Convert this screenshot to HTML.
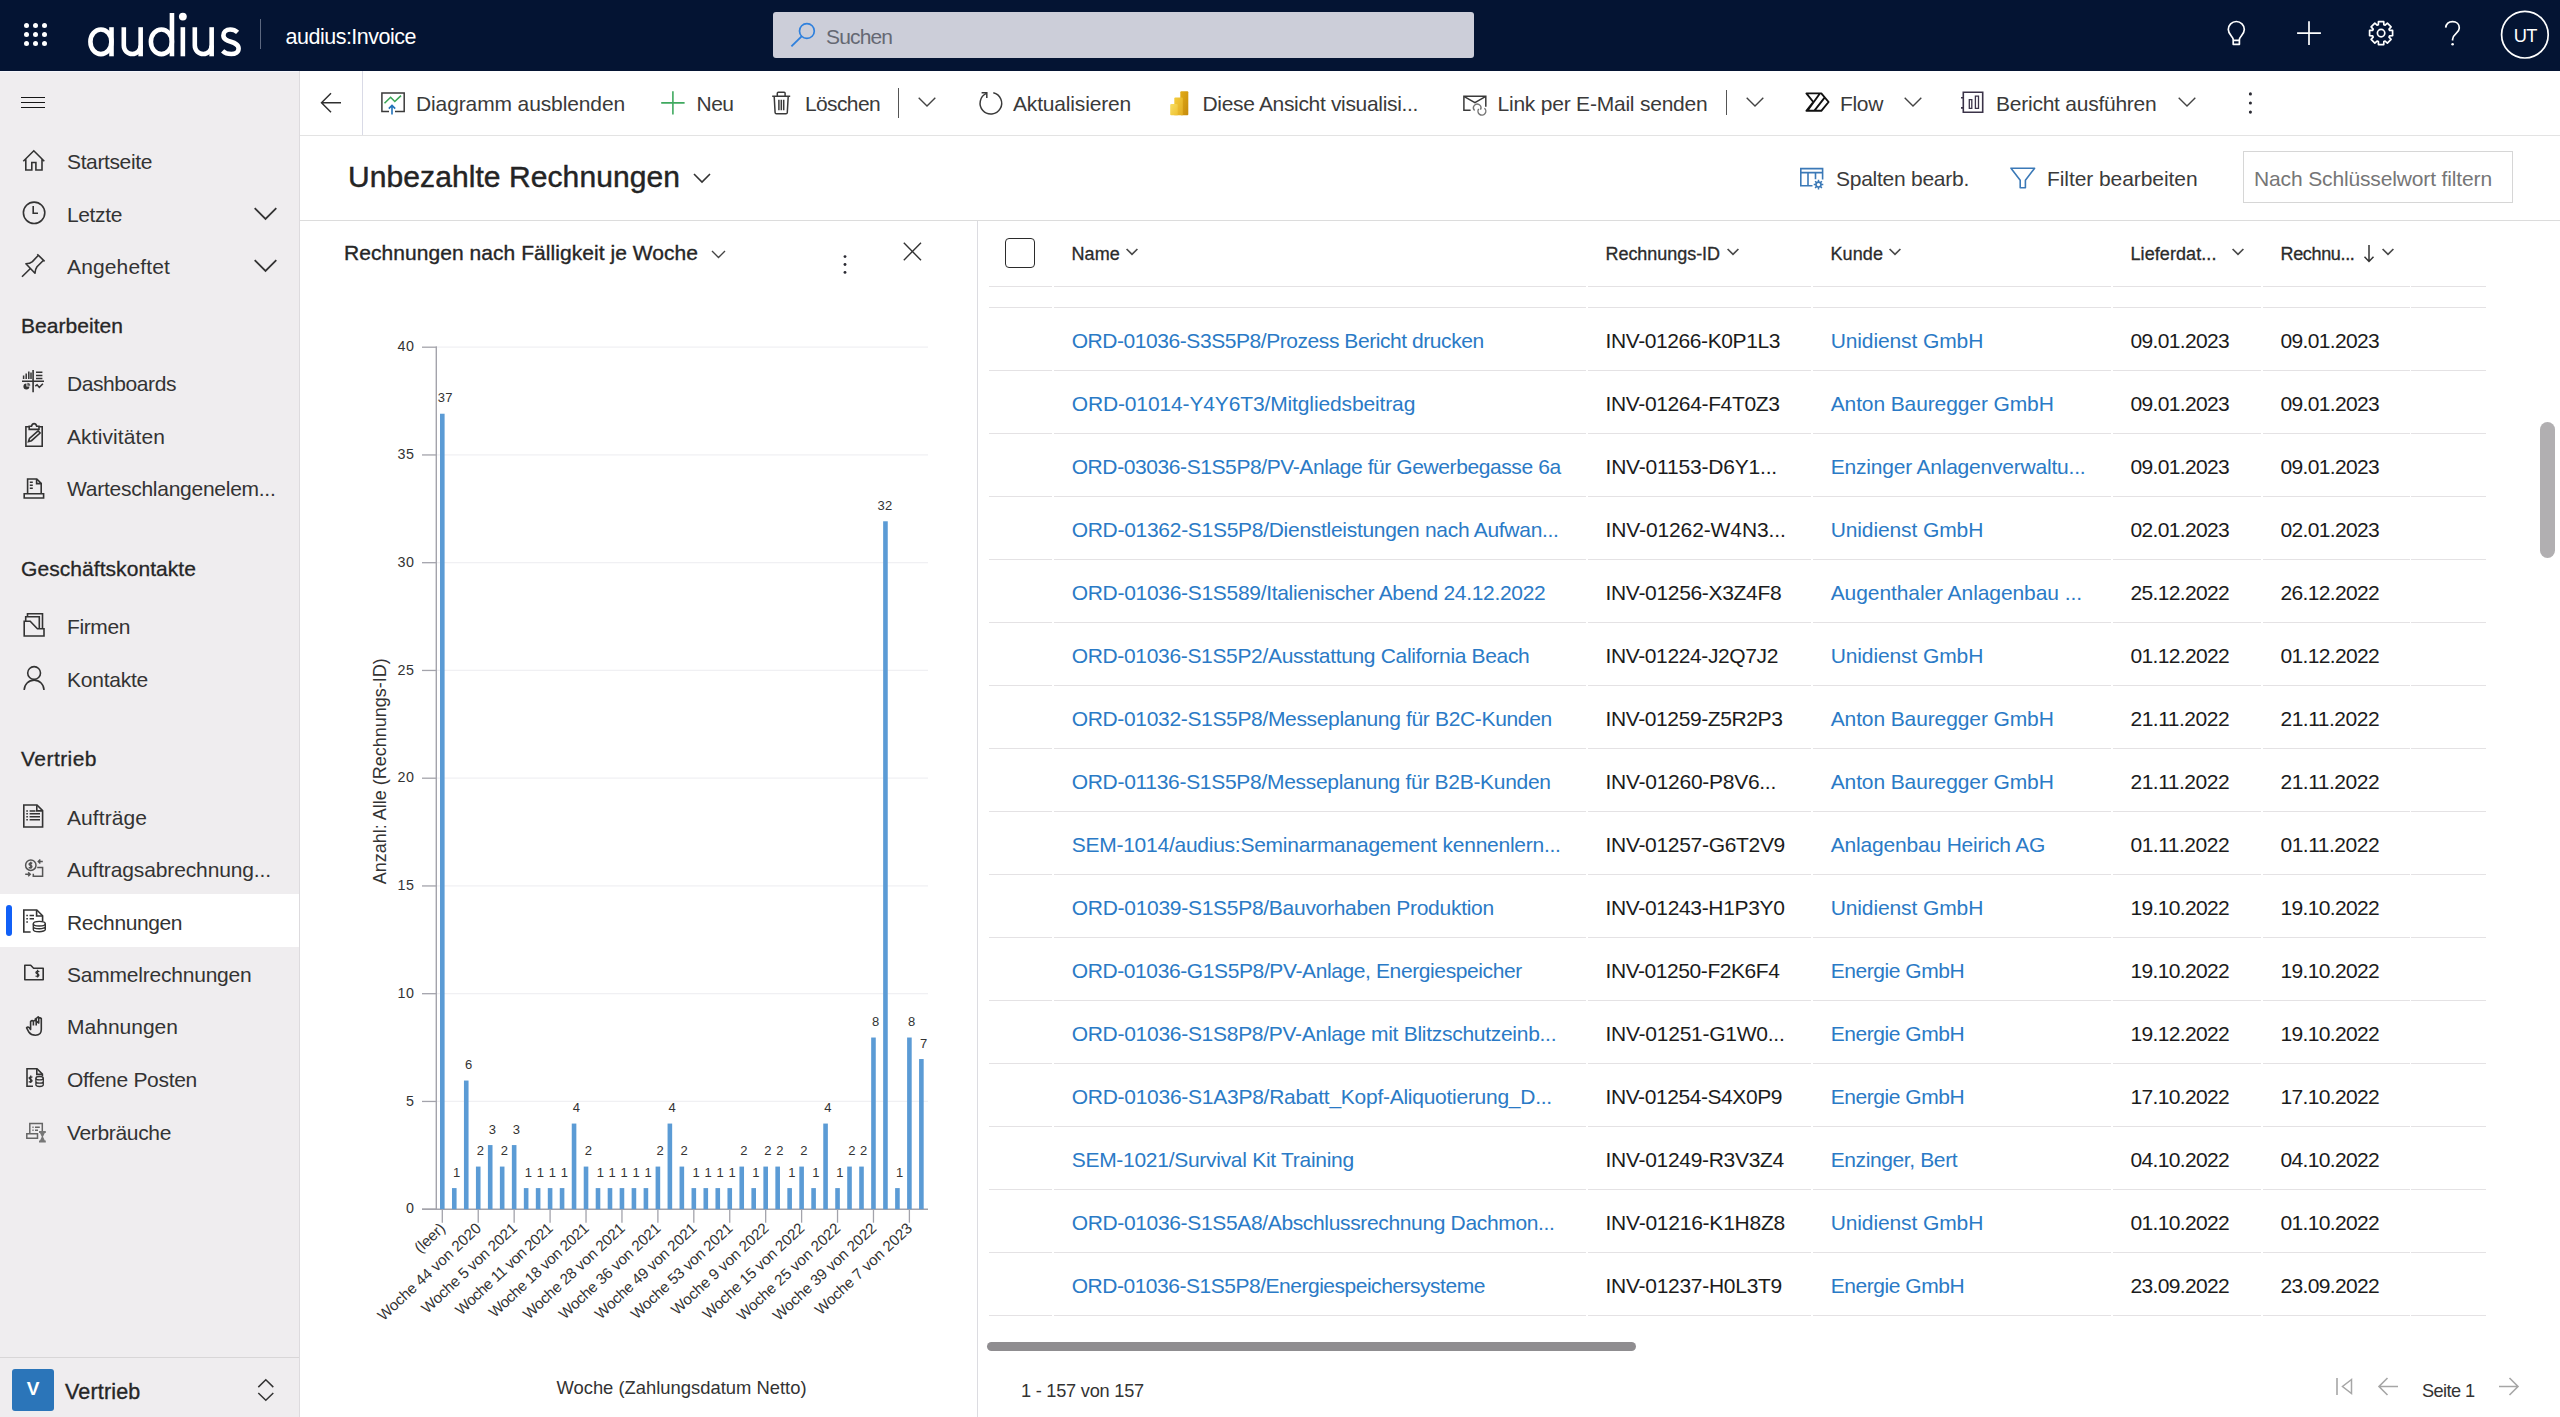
<!DOCTYPE html>
<html lang="de"><head><meta charset="utf-8"><title>Unbezahlte Rechnungen</title>
<style>
html,body{margin:0;padding:0;overflow:hidden;}
body{width:2560px;height:1417px;overflow:hidden;background:#fff;font-family:"Liberation Sans",sans-serif;position:relative;}
.t{position:absolute;white-space:nowrap;display:block;}
.b{position:absolute;display:block;}
svg{overflow:visible;}
</style></head><body>
<div class="b" style="left:0px;top:0px;width:2560px;height:70.8px;background:#041433;"></div>
<svg class="b" style="left:0px;top:0px;" width="70" height="70" viewBox="0 0 70 70"><circle cx="26.5" cy="25.5" r="2.5" fill="#fff"/><circle cx="26.5" cy="34.5" r="2.5" fill="#fff"/><circle cx="26.5" cy="43.5" r="2.5" fill="#fff"/><circle cx="35.5" cy="25.5" r="2.5" fill="#fff"/><circle cx="35.5" cy="34.5" r="2.5" fill="#fff"/><circle cx="35.5" cy="43.5" r="2.5" fill="#fff"/><circle cx="44.5" cy="25.5" r="2.5" fill="#fff"/><circle cx="44.5" cy="34.5" r="2.5" fill="#fff"/><circle cx="44.5" cy="43.5" r="2.5" fill="#fff"/></svg>
<svg class="b" style="left:0px;top:0px;" width="260" height="70" viewBox="0 0 260 70"><g fill="none" stroke="#fff" stroke-width="4.6" stroke-linecap="butt">
<ellipse cx="100.9" cy="41.8" rx="10.5" ry="12.3"/><path d="M111.5 27.2V56.3"/>
<path d="M123.8 27.2V45.6a8.4 8.4 0 0 0 16.85 0"/><path d="M140.65 27.2V56.3"/>
<ellipse cx="161.4" cy="41.8" rx="10.5" ry="12.3"/><path d="M171.95 13V56.3"/>
<path d="M182.85 27.2V56.3"/>
<path d="M194.8 27.2V45.6a8.4 8.4 0 0 0 16.85 0"/><path d="M211.65 27.2V56.3"/>
<path d="M237.6 32.4C235.4 30.4 233 29.5 230.2 29.5C226 29.5 223.4 31.9 223.4 35.4C223.4 43.2 238.6 40.4 238.6 48.4C238.6 52 235.6 54 231.2 54C227.6 54 224.8 52.9 222.6 50.8"/>
</g><circle cx="182.85" cy="16.6" r="3.9" fill="#fff"/></svg>
<div class="b" style="left:260px;top:19px;width:1px;height:30px;background:#5d6880;"></div>
<span class="t" style="left:285.60px;top:27.00px;font-size:21.5px;line-height:21.5px;color:#fff;letter-spacing:-0.511px;">audius:Invoice</span>
<div class="b" style="left:773px;top:12px;width:701px;height:46px;background:#ccced9;border-radius:3px;"></div>
<svg class="b" style="left:786px;top:20px;" width="34" height="34" viewBox="0 0 34 34"><circle cx="20.9" cy="11" r="7.4" fill="none" stroke="#2f80dd" stroke-width="1.7"/><path d="M15.6 16.4L5.4 26.4" stroke="#2f80dd" stroke-width="1.9" fill="none"/></svg>
<span class="t" style="left:826.00px;top:26.00px;font-size:21px;line-height:21px;color:#656873;letter-spacing:-0.837px;">Suchen</span>
<svg class="b" style="left:2200px;top:0" width="360" height="70" viewBox="2200 0 360 70"><path fill="none" stroke="#fff" stroke-width="1.700" stroke-linejoin="round" d="M2233.200 44.300V39.600C2233.200 36.800 2228.300 34.600 2228.300 29.500A8 8 0 0 1 2244.300 29.500C2244.300 34.600 2239.400 36.800 2239.400 39.600V44.300ZM2233.200 40.300H2239.400"/><path fill="none" stroke="#fff" stroke-width="1.700" d="M2309 21.200V45M2297.100 33.100H2320.900"/><path fill="none" stroke="#fff" stroke-width="1.700" stroke-width="1.600" stroke-linejoin="round" d="M2389.56 30.35L2392.60 30.47L2392.60 35.73L2389.56 35.85L2389.03 37.14L2391.09 39.38L2387.38 43.09L2385.14 41.03L2383.85 41.56L2383.73 44.60L2378.47 44.60L2378.35 41.56L2377.06 41.03L2374.82 43.09L2371.11 39.38L2373.17 37.14L2372.64 35.85L2369.60 35.73L2369.60 30.47L2372.64 30.35L2373.17 29.06L2371.11 26.82L2374.82 23.11L2377.06 25.17L2378.35 24.64L2378.47 21.60L2383.73 21.60L2383.85 24.64L2385.14 25.17L2387.38 23.11L2391.09 26.82L2389.03 29.06Z"/><circle fill="none" stroke="#fff" stroke-width="1.700" stroke-width="1.600" cx="2381.100" cy="33.100" r="3.700"/><path fill="none" stroke="#fff" stroke-width="1.700" d="M2445.700 27.700C2446.200 23.800 2449.100 21.700 2452.600 21.700C2456.500 21.700 2459.300 24.300 2459.300 27.900C2459.300 33.500 2452.600 33.700 2452.600 39.300V40.600"/><circle cx="2452.600" cy="44.300" r="1.300" fill="#fff"/><circle fill="none" stroke="#fff" stroke-width="1.700" stroke-width="1.250" cx="2524.900" cy="34.700" r="23.300"/></svg>
<span class="t" style="left:2513.75px;top:27.00px;font-size:18.3px;line-height:18.3px;color:#fff;letter-spacing:-0.697px;">UT</span>
<div class="b" style="left:0px;top:70.8px;width:299px;height:1346.2px;background:#efedef;"></div>
<div class="b" style="left:299px;top:70.8px;width:1px;height:1346.2px;background:#dddbde;"></div>
<div class="b" style="left:0px;top:70.8px;width:299px;height:1.2px;background:#f5f6fb;"></div>
<div class="b" style="left:21px;top:97px;width:24px;height:1.2px;background:#161616;"></div>
<div class="b" style="left:21px;top:102px;width:24px;height:1.2px;background:#161616;"></div>
<div class="b" style="left:21px;top:107px;width:24px;height:1.2px;background:#161616;"></div>
<div class="b" style="left:0px;top:894px;width:299px;height:52.5px;background:#fff;"></div>
<div class="b" style="left:6px;top:905px;width:5.5px;height:30.5px;background:#1160f7;border-radius:3px;"></div>
<span class="t" style="left:67.00px;top:151.00px;font-size:21px;line-height:21px;color:#333;letter-spacing:-0.371px;">Startseite</span>
<span class="t" style="left:67.00px;top:204.00px;font-size:21px;line-height:21px;color:#333;letter-spacing:-0.368px;">Letzte</span>
<span class="t" style="left:67.00px;top:256.00px;font-size:21px;line-height:21px;color:#333;letter-spacing:0.141px;">Angeheftet</span>
<span class="t" style="left:67.00px;top:373.00px;font-size:21px;line-height:21px;color:#333;letter-spacing:-0.423px;">Dashboards</span>
<span class="t" style="left:67.00px;top:426.00px;font-size:21px;line-height:21px;color:#333;letter-spacing:0.102px;">Aktivitäten</span>
<span class="t" style="left:67.00px;top:478.00px;font-size:21px;line-height:21px;color:#333;letter-spacing:-0.261px;">Warteschlangenelem...</span>
<span class="t" style="left:67.00px;top:616.00px;font-size:21px;line-height:21px;color:#333;letter-spacing:-0.390px;">Firmen</span>
<span class="t" style="left:67.00px;top:669.00px;font-size:21px;line-height:21px;color:#333;letter-spacing:-0.237px;">Kontakte</span>
<span class="t" style="left:67.00px;top:807.00px;font-size:21px;line-height:21px;color:#333;letter-spacing:0.077px;">Aufträge</span>
<span class="t" style="left:67.00px;top:859.00px;font-size:21px;line-height:21px;color:#333;letter-spacing:-0.126px;">Auftragsabrechnung...</span>
<span class="t" style="left:67.00px;top:912.00px;font-size:21px;line-height:21px;color:#333;letter-spacing:-0.410px;">Rechnungen</span>
<span class="t" style="left:67.00px;top:964.00px;font-size:21px;line-height:21px;color:#333;letter-spacing:-0.215px;">Sammelrechnungen</span>
<span class="t" style="left:67.00px;top:1016.00px;font-size:21px;line-height:21px;color:#333;letter-spacing:0.008px;">Mahnungen</span>
<span class="t" style="left:67.00px;top:1069.00px;font-size:21px;line-height:21px;color:#333;letter-spacing:-0.298px;">Offene Posten</span>
<span class="t" style="left:67.00px;top:1122.00px;font-size:21px;line-height:21px;color:#333;letter-spacing:-0.341px;">Verbräuche</span>
<span class="t" style="left:21.00px;top:315.00px;font-size:21px;line-height:21px;color:#262626;-webkit-text-stroke:0.3px #262626;letter-spacing:0.042px;">Bearbeiten</span>
<span class="t" style="left:21.00px;top:558.00px;font-size:21px;line-height:21px;color:#262626;-webkit-text-stroke:0.3px #262626;letter-spacing:0.063px;">Geschäftskontakte</span>
<span class="t" style="left:21.00px;top:748.00px;font-size:21px;line-height:21px;color:#262626;-webkit-text-stroke:0.3px #262626;letter-spacing:0.453px;">Vertrieb</span>
<svg class="b" style="left:254px;top:206.9px;" width="23" height="14" viewBox="0 0 23 14"><path d="M0.700 1.200l10.800 10.800l10.800-10.800" fill="none" stroke="#333" stroke-width="1.800"/></svg>
<svg class="b" style="left:254px;top:258.8px;" width="23" height="14" viewBox="0 0 23 14"><path d="M0.700 1.200l10.800 10.800l10.800-10.800" fill="none" stroke="#333" stroke-width="1.800"/></svg>
<div class="b" style="left:0px;top:1357px;width:299px;height:1px;background:#d8d6d7;"></div>
<div class="b" style="left:12px;top:1369px;width:42px;height:42px;background:#2b75b9;border-radius:3px;"></div>
<span class="t" style="left:26.66px;top:1379.00px;font-size:19px;line-height:19px;color:#fff;font-weight:700;">V</span>
<span class="t" style="left:65.00px;top:1382.00px;font-size:21.5px;line-height:21.5px;color:#262626;-webkit-text-stroke:0.35px #262626;letter-spacing:0.175px;">Vertrieb</span>
<svg class="b" style="left:256px;top:1378px;" width="20" height="26" viewBox="0 0 20 26"><path d="M2.300 9.100l7.500-7.300 7.500 7.300M2.300 15l7.500 7.300 7.500-7.300" fill="none" stroke="#333" stroke-width="1.500"/></svg>
<div class="b" style="left:300px;top:134.5px;width:2260px;height:1.5px;background:#e3e3e3;"></div>
<div class="b" style="left:362px;top:71px;width:1.2px;height:64px;background:#d9dae6;"></div>
<span class="t" style="left:416.00px;top:93.00px;font-size:21px;line-height:21px;color:#3a3a3a;letter-spacing:-0.120px;">Diagramm ausblenden</span>
<span class="t" style="left:696.50px;top:93.00px;font-size:21px;line-height:21px;color:#3a3a3a;letter-spacing:-0.508px;">Neu</span>
<span class="t" style="left:805.00px;top:93.00px;font-size:21px;line-height:21px;color:#3a3a3a;letter-spacing:-0.628px;">Löschen</span>
<span class="t" style="left:1013.00px;top:93.00px;font-size:21px;line-height:21px;color:#3a3a3a;letter-spacing:-0.171px;">Aktualisieren</span>
<span class="t" style="left:1202.50px;top:93.00px;font-size:21px;line-height:21px;color:#3a3a3a;letter-spacing:-0.330px;">Diese Ansicht visualisi...</span>
<span class="t" style="left:1497.50px;top:93.00px;font-size:21px;line-height:21px;color:#3a3a3a;letter-spacing:-0.217px;">Link per E-Mail senden</span>
<span class="t" style="left:1840.00px;top:93.00px;font-size:21px;line-height:21px;color:#3a3a3a;letter-spacing:-0.335px;">Flow</span>
<span class="t" style="left:1996.00px;top:93.00px;font-size:21px;line-height:21px;color:#3a3a3a;letter-spacing:-0.241px;">Bericht ausführen</span>
<div class="b" style="left:898px;top:87.5px;width:1.3px;height:30px;background:#555;"></div>
<div class="b" style="left:1725.6px;top:90px;width:1.3px;height:24.5px;background:#555;"></div>
<svg class="b" style="left:918px;top:96.6px;" width="18" height="11" viewBox="0 0 18 11"><path d="M0.7 0.7l8.3 8.3 8.3-8.3" fill="none" stroke="#444" stroke-width="1.4"/></svg>
<svg class="b" style="left:1745.5px;top:96.6px;" width="18" height="11" viewBox="0 0 18 11"><path d="M0.7 0.7l8.3 8.3 8.3-8.3" fill="none" stroke="#444" stroke-width="1.4"/></svg>
<svg class="b" style="left:1904.1px;top:96.6px;" width="18" height="11" viewBox="0 0 18 11"><path d="M0.7 0.7l8.3 8.3 8.3-8.3" fill="none" stroke="#444" stroke-width="1.4"/></svg>
<svg class="b" style="left:2178.3px;top:96.6px;" width="18" height="11" viewBox="0 0 18 11"><path d="M0.7 0.7l8.3 8.3 8.3-8.3" fill="none" stroke="#444" stroke-width="1.4"/></svg>
<svg class="b" style="left:2245px;top:88px;" width="10" height="30" viewBox="0 0 10 30"><circle cx="5.400" cy="5.900" r="1.550" fill="#2b2b33"/><circle cx="5.400" cy="15" r="1.550" fill="#2b2b33"/><circle cx="5.400" cy="24.100" r="1.550" fill="#2b2b33"/></svg>
<svg class="b" style="left:320px;top:92px;" width="22" height="22" viewBox="0 0 22 22"><path d="M21 10.700H2M11 1.200L1.500 10.700l9.500 9.500" fill="none" stroke="#2f2f2f" stroke-width="1.450"/></svg>
<span class="t" style="left:348.00px;top:162.00px;font-size:30px;line-height:30px;color:#242424;-webkit-text-stroke:0.45px #242424;letter-spacing:0.083px;">Unbezahlte Rechnungen</span>
<svg class="b" style="left:692.5px;top:172.8px;" width="18" height="11" viewBox="0 0 18 11"><path d="M1 1l8 8 8-8" fill="none" stroke="#333" stroke-width="1.6"/></svg>
<span class="t" style="left:1836.00px;top:168.00px;font-size:21px;line-height:21px;color:#3a3a3a;letter-spacing:-0.257px;">Spalten bearb.</span>
<span class="t" style="left:2047.00px;top:168.00px;font-size:21px;line-height:21px;color:#3a3a3a;letter-spacing:-0.073px;">Filter bearbeiten</span>
<div class="b" style="left:2243px;top:151px;width:268px;height:50px;border:1px solid #d6d6d6;"></div>
<span class="t" style="left:2254.00px;top:168.00px;font-size:21px;line-height:21px;color:#767676;letter-spacing:-0.138px;">Nach Schlüsselwort filtern</span>
<div class="b" style="left:300px;top:220px;width:2260px;height:1.3px;background:#dcdcdc;"></div>
<div class="b" style="left:977px;top:221px;width:1.3px;height:1196px;background:#dcdce1;"></div>
<div class="b" style="left:1005.200px;top:238.100px;width:29.600px;height:29.600px;box-sizing:border-box;border:1.500px solid #2b2b2b;border-radius:4px;background:#fff"></div>
<span class="t" style="left:1071.50px;top:245.00px;font-size:18px;line-height:18px;color:#2b2b2b;-webkit-text-stroke:0.3px #2b2b2b;letter-spacing:0.121px;">Name</span>
<svg class="b" style="left:1126px;top:248.3px;" width="12" height="8" viewBox="0 0 12 8"><path d="M0.600 1l5.400 5.400L11.400 1" fill="none" stroke="#4a4a4a" stroke-width="1.700"/></svg>
<span class="t" style="left:1605.50px;top:245.00px;font-size:18px;line-height:18px;color:#2b2b2b;-webkit-text-stroke:0.3px #2b2b2b;letter-spacing:-0.047px;">Rechnungs-ID</span>
<svg class="b" style="left:1726.5px;top:248.3px;" width="12" height="8" viewBox="0 0 12 8"><path d="M0.600 1l5.400 5.400L11.400 1" fill="none" stroke="#4a4a4a" stroke-width="1.700"/></svg>
<span class="t" style="left:1830.50px;top:245.00px;font-size:18px;line-height:18px;color:#2b2b2b;-webkit-text-stroke:0.3px #2b2b2b;letter-spacing:0.090px;">Kunde</span>
<svg class="b" style="left:1889px;top:248.3px;" width="12" height="8" viewBox="0 0 12 8"><path d="M0.600 1l5.400 5.400L11.400 1" fill="none" stroke="#4a4a4a" stroke-width="1.700"/></svg>
<span class="t" style="left:2130.50px;top:245.00px;font-size:18px;line-height:18px;color:#2b2b2b;-webkit-text-stroke:0.3px #2b2b2b;letter-spacing:0.079px;">Lieferdat...</span>
<svg class="b" style="left:2232px;top:248.3px;" width="12" height="8" viewBox="0 0 12 8"><path d="M0.600 1l5.400 5.400L11.400 1" fill="none" stroke="#4a4a4a" stroke-width="1.700"/></svg>
<span class="t" style="left:2280.50px;top:245.00px;font-size:18px;line-height:18px;color:#2b2b2b;-webkit-text-stroke:0.3px #2b2b2b;letter-spacing:-0.338px;">Rechnu...</span>
<svg class="b" style="left:2382px;top:248.3px;" width="12" height="8" viewBox="0 0 12 8"><path d="M0.600 1l5.400 5.400L11.400 1" fill="none" stroke="#4a4a4a" stroke-width="1.700"/></svg>
<svg class="b" style="left:2363px;top:244px;" width="12" height="20" viewBox="0 0 12 20"><path d="M6 1v16.500M1.500 12.800L6 17.500l4.500-4.700" fill="none" stroke="#333" stroke-width="1.5"/></svg>
<div class="b" style="left:988.5px;top:286px;width:63.0px;height:1px;background:#e4e2e4;"></div>
<div class="b" style="left:1053.5px;top:286px;width:532.5px;height:1px;background:#e4e2e4;"></div>
<div class="b" style="left:1588px;top:286px;width:222.5px;height:1px;background:#e4e2e4;"></div>
<div class="b" style="left:1812.5px;top:286px;width:298.0px;height:1px;background:#e4e2e4;"></div>
<div class="b" style="left:2112.5px;top:286px;width:148.0px;height:1px;background:#e4e2e4;"></div>
<div class="b" style="left:2262.5px;top:286px;width:147.5px;height:1px;background:#e4e2e4;"></div>
<div class="b" style="left:2411px;top:286px;width:75px;height:1px;background:#e4e2e4;"></div>
<div class="b" style="left:988.5px;top:307px;width:63.0px;height:1px;background:#e4e2e4;"></div>
<div class="b" style="left:1053.5px;top:307px;width:532.5px;height:1px;background:#e4e2e4;"></div>
<div class="b" style="left:1588px;top:307px;width:222.5px;height:1px;background:#e4e2e4;"></div>
<div class="b" style="left:1812.5px;top:307px;width:298.0px;height:1px;background:#e4e2e4;"></div>
<div class="b" style="left:2112.5px;top:307px;width:148.0px;height:1px;background:#e4e2e4;"></div>
<div class="b" style="left:2262.5px;top:307px;width:147.5px;height:1px;background:#e4e2e4;"></div>
<div class="b" style="left:2411px;top:307px;width:75px;height:1px;background:#e4e2e4;"></div>
<div class="b" style="left:988.5px;top:370px;width:63.0px;height:1px;background:#e4e2e4;"></div>
<div class="b" style="left:1053.5px;top:370px;width:532.5px;height:1px;background:#e4e2e4;"></div>
<div class="b" style="left:1588px;top:370px;width:222.5px;height:1px;background:#e4e2e4;"></div>
<div class="b" style="left:1812.5px;top:370px;width:298.0px;height:1px;background:#e4e2e4;"></div>
<div class="b" style="left:2112.5px;top:370px;width:148.0px;height:1px;background:#e4e2e4;"></div>
<div class="b" style="left:2262.5px;top:370px;width:147.5px;height:1px;background:#e4e2e4;"></div>
<div class="b" style="left:2411px;top:370px;width:75px;height:1px;background:#e4e2e4;"></div>
<div class="b" style="left:988.5px;top:433px;width:63.0px;height:1px;background:#e4e2e4;"></div>
<div class="b" style="left:1053.5px;top:433px;width:532.5px;height:1px;background:#e4e2e4;"></div>
<div class="b" style="left:1588px;top:433px;width:222.5px;height:1px;background:#e4e2e4;"></div>
<div class="b" style="left:1812.5px;top:433px;width:298.0px;height:1px;background:#e4e2e4;"></div>
<div class="b" style="left:2112.5px;top:433px;width:148.0px;height:1px;background:#e4e2e4;"></div>
<div class="b" style="left:2262.5px;top:433px;width:147.5px;height:1px;background:#e4e2e4;"></div>
<div class="b" style="left:2411px;top:433px;width:75px;height:1px;background:#e4e2e4;"></div>
<div class="b" style="left:988.5px;top:496px;width:63.0px;height:1px;background:#e4e2e4;"></div>
<div class="b" style="left:1053.5px;top:496px;width:532.5px;height:1px;background:#e4e2e4;"></div>
<div class="b" style="left:1588px;top:496px;width:222.5px;height:1px;background:#e4e2e4;"></div>
<div class="b" style="left:1812.5px;top:496px;width:298.0px;height:1px;background:#e4e2e4;"></div>
<div class="b" style="left:2112.5px;top:496px;width:148.0px;height:1px;background:#e4e2e4;"></div>
<div class="b" style="left:2262.5px;top:496px;width:147.5px;height:1px;background:#e4e2e4;"></div>
<div class="b" style="left:2411px;top:496px;width:75px;height:1px;background:#e4e2e4;"></div>
<div class="b" style="left:988.5px;top:559px;width:63.0px;height:1px;background:#e4e2e4;"></div>
<div class="b" style="left:1053.5px;top:559px;width:532.5px;height:1px;background:#e4e2e4;"></div>
<div class="b" style="left:1588px;top:559px;width:222.5px;height:1px;background:#e4e2e4;"></div>
<div class="b" style="left:1812.5px;top:559px;width:298.0px;height:1px;background:#e4e2e4;"></div>
<div class="b" style="left:2112.5px;top:559px;width:148.0px;height:1px;background:#e4e2e4;"></div>
<div class="b" style="left:2262.5px;top:559px;width:147.5px;height:1px;background:#e4e2e4;"></div>
<div class="b" style="left:2411px;top:559px;width:75px;height:1px;background:#e4e2e4;"></div>
<div class="b" style="left:988.5px;top:622px;width:63.0px;height:1px;background:#e4e2e4;"></div>
<div class="b" style="left:1053.5px;top:622px;width:532.5px;height:1px;background:#e4e2e4;"></div>
<div class="b" style="left:1588px;top:622px;width:222.5px;height:1px;background:#e4e2e4;"></div>
<div class="b" style="left:1812.5px;top:622px;width:298.0px;height:1px;background:#e4e2e4;"></div>
<div class="b" style="left:2112.5px;top:622px;width:148.0px;height:1px;background:#e4e2e4;"></div>
<div class="b" style="left:2262.5px;top:622px;width:147.5px;height:1px;background:#e4e2e4;"></div>
<div class="b" style="left:2411px;top:622px;width:75px;height:1px;background:#e4e2e4;"></div>
<div class="b" style="left:988.5px;top:685px;width:63.0px;height:1px;background:#e4e2e4;"></div>
<div class="b" style="left:1053.5px;top:685px;width:532.5px;height:1px;background:#e4e2e4;"></div>
<div class="b" style="left:1588px;top:685px;width:222.5px;height:1px;background:#e4e2e4;"></div>
<div class="b" style="left:1812.5px;top:685px;width:298.0px;height:1px;background:#e4e2e4;"></div>
<div class="b" style="left:2112.5px;top:685px;width:148.0px;height:1px;background:#e4e2e4;"></div>
<div class="b" style="left:2262.5px;top:685px;width:147.5px;height:1px;background:#e4e2e4;"></div>
<div class="b" style="left:2411px;top:685px;width:75px;height:1px;background:#e4e2e4;"></div>
<div class="b" style="left:988.5px;top:748px;width:63.0px;height:1px;background:#e4e2e4;"></div>
<div class="b" style="left:1053.5px;top:748px;width:532.5px;height:1px;background:#e4e2e4;"></div>
<div class="b" style="left:1588px;top:748px;width:222.5px;height:1px;background:#e4e2e4;"></div>
<div class="b" style="left:1812.5px;top:748px;width:298.0px;height:1px;background:#e4e2e4;"></div>
<div class="b" style="left:2112.5px;top:748px;width:148.0px;height:1px;background:#e4e2e4;"></div>
<div class="b" style="left:2262.5px;top:748px;width:147.5px;height:1px;background:#e4e2e4;"></div>
<div class="b" style="left:2411px;top:748px;width:75px;height:1px;background:#e4e2e4;"></div>
<div class="b" style="left:988.5px;top:811px;width:63.0px;height:1px;background:#e4e2e4;"></div>
<div class="b" style="left:1053.5px;top:811px;width:532.5px;height:1px;background:#e4e2e4;"></div>
<div class="b" style="left:1588px;top:811px;width:222.5px;height:1px;background:#e4e2e4;"></div>
<div class="b" style="left:1812.5px;top:811px;width:298.0px;height:1px;background:#e4e2e4;"></div>
<div class="b" style="left:2112.5px;top:811px;width:148.0px;height:1px;background:#e4e2e4;"></div>
<div class="b" style="left:2262.5px;top:811px;width:147.5px;height:1px;background:#e4e2e4;"></div>
<div class="b" style="left:2411px;top:811px;width:75px;height:1px;background:#e4e2e4;"></div>
<div class="b" style="left:988.5px;top:874px;width:63.0px;height:1px;background:#e4e2e4;"></div>
<div class="b" style="left:1053.5px;top:874px;width:532.5px;height:1px;background:#e4e2e4;"></div>
<div class="b" style="left:1588px;top:874px;width:222.5px;height:1px;background:#e4e2e4;"></div>
<div class="b" style="left:1812.5px;top:874px;width:298.0px;height:1px;background:#e4e2e4;"></div>
<div class="b" style="left:2112.5px;top:874px;width:148.0px;height:1px;background:#e4e2e4;"></div>
<div class="b" style="left:2262.5px;top:874px;width:147.5px;height:1px;background:#e4e2e4;"></div>
<div class="b" style="left:2411px;top:874px;width:75px;height:1px;background:#e4e2e4;"></div>
<div class="b" style="left:988.5px;top:937px;width:63.0px;height:1px;background:#e4e2e4;"></div>
<div class="b" style="left:1053.5px;top:937px;width:532.5px;height:1px;background:#e4e2e4;"></div>
<div class="b" style="left:1588px;top:937px;width:222.5px;height:1px;background:#e4e2e4;"></div>
<div class="b" style="left:1812.5px;top:937px;width:298.0px;height:1px;background:#e4e2e4;"></div>
<div class="b" style="left:2112.5px;top:937px;width:148.0px;height:1px;background:#e4e2e4;"></div>
<div class="b" style="left:2262.5px;top:937px;width:147.5px;height:1px;background:#e4e2e4;"></div>
<div class="b" style="left:2411px;top:937px;width:75px;height:1px;background:#e4e2e4;"></div>
<div class="b" style="left:988.5px;top:1000px;width:63.0px;height:1px;background:#e4e2e4;"></div>
<div class="b" style="left:1053.5px;top:1000px;width:532.5px;height:1px;background:#e4e2e4;"></div>
<div class="b" style="left:1588px;top:1000px;width:222.5px;height:1px;background:#e4e2e4;"></div>
<div class="b" style="left:1812.5px;top:1000px;width:298.0px;height:1px;background:#e4e2e4;"></div>
<div class="b" style="left:2112.5px;top:1000px;width:148.0px;height:1px;background:#e4e2e4;"></div>
<div class="b" style="left:2262.5px;top:1000px;width:147.5px;height:1px;background:#e4e2e4;"></div>
<div class="b" style="left:2411px;top:1000px;width:75px;height:1px;background:#e4e2e4;"></div>
<div class="b" style="left:988.5px;top:1063px;width:63.0px;height:1px;background:#e4e2e4;"></div>
<div class="b" style="left:1053.5px;top:1063px;width:532.5px;height:1px;background:#e4e2e4;"></div>
<div class="b" style="left:1588px;top:1063px;width:222.5px;height:1px;background:#e4e2e4;"></div>
<div class="b" style="left:1812.5px;top:1063px;width:298.0px;height:1px;background:#e4e2e4;"></div>
<div class="b" style="left:2112.5px;top:1063px;width:148.0px;height:1px;background:#e4e2e4;"></div>
<div class="b" style="left:2262.5px;top:1063px;width:147.5px;height:1px;background:#e4e2e4;"></div>
<div class="b" style="left:2411px;top:1063px;width:75px;height:1px;background:#e4e2e4;"></div>
<div class="b" style="left:988.5px;top:1126px;width:63.0px;height:1px;background:#e4e2e4;"></div>
<div class="b" style="left:1053.5px;top:1126px;width:532.5px;height:1px;background:#e4e2e4;"></div>
<div class="b" style="left:1588px;top:1126px;width:222.5px;height:1px;background:#e4e2e4;"></div>
<div class="b" style="left:1812.5px;top:1126px;width:298.0px;height:1px;background:#e4e2e4;"></div>
<div class="b" style="left:2112.5px;top:1126px;width:148.0px;height:1px;background:#e4e2e4;"></div>
<div class="b" style="left:2262.5px;top:1126px;width:147.5px;height:1px;background:#e4e2e4;"></div>
<div class="b" style="left:2411px;top:1126px;width:75px;height:1px;background:#e4e2e4;"></div>
<div class="b" style="left:988.5px;top:1189px;width:63.0px;height:1px;background:#e4e2e4;"></div>
<div class="b" style="left:1053.5px;top:1189px;width:532.5px;height:1px;background:#e4e2e4;"></div>
<div class="b" style="left:1588px;top:1189px;width:222.5px;height:1px;background:#e4e2e4;"></div>
<div class="b" style="left:1812.5px;top:1189px;width:298.0px;height:1px;background:#e4e2e4;"></div>
<div class="b" style="left:2112.5px;top:1189px;width:148.0px;height:1px;background:#e4e2e4;"></div>
<div class="b" style="left:2262.5px;top:1189px;width:147.5px;height:1px;background:#e4e2e4;"></div>
<div class="b" style="left:2411px;top:1189px;width:75px;height:1px;background:#e4e2e4;"></div>
<div class="b" style="left:988.5px;top:1252px;width:63.0px;height:1px;background:#e4e2e4;"></div>
<div class="b" style="left:1053.5px;top:1252px;width:532.5px;height:1px;background:#e4e2e4;"></div>
<div class="b" style="left:1588px;top:1252px;width:222.5px;height:1px;background:#e4e2e4;"></div>
<div class="b" style="left:1812.5px;top:1252px;width:298.0px;height:1px;background:#e4e2e4;"></div>
<div class="b" style="left:2112.5px;top:1252px;width:148.0px;height:1px;background:#e4e2e4;"></div>
<div class="b" style="left:2262.5px;top:1252px;width:147.5px;height:1px;background:#e4e2e4;"></div>
<div class="b" style="left:2411px;top:1252px;width:75px;height:1px;background:#e4e2e4;"></div>
<div class="b" style="left:988.5px;top:1315px;width:63.0px;height:1px;background:#e4e2e4;"></div>
<div class="b" style="left:1053.5px;top:1315px;width:532.5px;height:1px;background:#e4e2e4;"></div>
<div class="b" style="left:1588px;top:1315px;width:222.5px;height:1px;background:#e4e2e4;"></div>
<div class="b" style="left:1812.5px;top:1315px;width:298.0px;height:1px;background:#e4e2e4;"></div>
<div class="b" style="left:2112.5px;top:1315px;width:148.0px;height:1px;background:#e4e2e4;"></div>
<div class="b" style="left:2262.5px;top:1315px;width:147.5px;height:1px;background:#e4e2e4;"></div>
<div class="b" style="left:2411px;top:1315px;width:75px;height:1px;background:#e4e2e4;"></div>
<span class="t" style="left:1071.70px;top:330.00px;font-size:21px;line-height:21px;color:#2a7ac6;letter-spacing:-0.438px;">ORD-01036-S3S5P8/Prozess Bericht drucken</span>
<span class="t" style="left:1605.50px;top:330.00px;font-size:21px;line-height:21px;color:#1b1b1b;letter-spacing:-0.404px;">INV-01266-K0P1L3</span>
<span class="t" style="left:1830.70px;top:330.00px;font-size:21px;line-height:21px;color:#2a7ac6;letter-spacing:-0.111px;">Unidienst GmbH</span>
<span class="t" style="left:2130.50px;top:330.00px;font-size:21px;line-height:21px;color:#1b1b1b;letter-spacing:-0.650px;">09.01.2023</span>
<span class="t" style="left:2280.50px;top:330.00px;font-size:21px;line-height:21px;color:#1b1b1b;letter-spacing:-0.650px;">09.01.2023</span>
<span class="t" style="left:1071.70px;top:393.00px;font-size:21px;line-height:21px;color:#2a7ac6;letter-spacing:-0.131px;">ORD-01014-Y4Y6T3/Mitgliedsbeitrag</span>
<span class="t" style="left:1605.50px;top:393.00px;font-size:21px;line-height:21px;color:#1b1b1b;letter-spacing:-0.360px;">INV-01264-F4T0Z3</span>
<span class="t" style="left:1830.70px;top:393.00px;font-size:21px;line-height:21px;color:#2a7ac6;letter-spacing:-0.114px;">Anton Bauregger GmbH</span>
<span class="t" style="left:2130.50px;top:393.00px;font-size:21px;line-height:21px;color:#1b1b1b;letter-spacing:-0.650px;">09.01.2023</span>
<span class="t" style="left:2280.50px;top:393.00px;font-size:21px;line-height:21px;color:#1b1b1b;letter-spacing:-0.650px;">09.01.2023</span>
<span class="t" style="left:1071.70px;top:456.00px;font-size:21px;line-height:21px;color:#2a7ac6;letter-spacing:-0.409px;">ORD-03036-S1S5P8/PV-Anlage für Gewerbegasse 6a</span>
<span class="t" style="left:1605.50px;top:456.00px;font-size:21px;line-height:21px;color:#1b1b1b;letter-spacing:-0.189px;">INV-01153-D6Y1...</span>
<span class="t" style="left:1830.70px;top:456.00px;font-size:21px;line-height:21px;color:#2a7ac6;letter-spacing:-0.205px;">Enzinger Anlagenverwaltu...</span>
<span class="t" style="left:2130.50px;top:456.00px;font-size:21px;line-height:21px;color:#1b1b1b;letter-spacing:-0.650px;">09.01.2023</span>
<span class="t" style="left:2280.50px;top:456.00px;font-size:21px;line-height:21px;color:#1b1b1b;letter-spacing:-0.650px;">09.01.2023</span>
<span class="t" style="left:1071.70px;top:519.00px;font-size:21px;line-height:21px;color:#2a7ac6;letter-spacing:-0.288px;">ORD-01362-S1S5P8/Dienstleistungen nach Aufwan...</span>
<span class="t" style="left:1605.50px;top:519.00px;font-size:21px;line-height:21px;color:#1b1b1b;letter-spacing:-0.111px;">INV-01262-W4N3...</span>
<span class="t" style="left:1830.70px;top:519.00px;font-size:21px;line-height:21px;color:#2a7ac6;letter-spacing:-0.111px;">Unidienst GmbH</span>
<span class="t" style="left:2130.50px;top:519.00px;font-size:21px;line-height:21px;color:#1b1b1b;letter-spacing:-0.650px;">02.01.2023</span>
<span class="t" style="left:2280.50px;top:519.00px;font-size:21px;line-height:21px;color:#1b1b1b;letter-spacing:-0.650px;">02.01.2023</span>
<span class="t" style="left:1071.70px;top:582.00px;font-size:21px;line-height:21px;color:#2a7ac6;letter-spacing:-0.302px;">ORD-01036-S1S589/Italienischer Abend 24.12.2022</span>
<span class="t" style="left:1605.50px;top:582.00px;font-size:21px;line-height:21px;color:#1b1b1b;letter-spacing:-0.321px;">INV-01256-X3Z4F8</span>
<span class="t" style="left:1830.70px;top:582.00px;font-size:21px;line-height:21px;color:#2a7ac6;letter-spacing:-0.084px;">Augenthaler Anlagenbau ...</span>
<span class="t" style="left:2130.50px;top:582.00px;font-size:21px;line-height:21px;color:#1b1b1b;letter-spacing:-0.650px;">25.12.2022</span>
<span class="t" style="left:2280.50px;top:582.00px;font-size:21px;line-height:21px;color:#1b1b1b;letter-spacing:-0.650px;">26.12.2022</span>
<span class="t" style="left:1071.70px;top:645.00px;font-size:21px;line-height:21px;color:#2a7ac6;letter-spacing:-0.333px;">ORD-01036-S1S5P2/Ausstattung California Beach</span>
<span class="t" style="left:1605.50px;top:645.00px;font-size:21px;line-height:21px;color:#1b1b1b;letter-spacing:-0.381px;">INV-01224-J2Q7J2</span>
<span class="t" style="left:1830.70px;top:645.00px;font-size:21px;line-height:21px;color:#2a7ac6;letter-spacing:-0.111px;">Unidienst GmbH</span>
<span class="t" style="left:2130.50px;top:645.00px;font-size:21px;line-height:21px;color:#1b1b1b;letter-spacing:-0.650px;">01.12.2022</span>
<span class="t" style="left:2280.50px;top:645.00px;font-size:21px;line-height:21px;color:#1b1b1b;letter-spacing:-0.650px;">01.12.2022</span>
<span class="t" style="left:1071.70px;top:708.00px;font-size:21px;line-height:21px;color:#2a7ac6;letter-spacing:-0.335px;">ORD-01032-S1S5P8/Messeplanung für B2C-Kunden</span>
<span class="t" style="left:1605.50px;top:708.00px;font-size:21px;line-height:21px;color:#1b1b1b;letter-spacing:-0.392px;">INV-01259-Z5R2P3</span>
<span class="t" style="left:1830.70px;top:708.00px;font-size:21px;line-height:21px;color:#2a7ac6;letter-spacing:-0.114px;">Anton Bauregger GmbH</span>
<span class="t" style="left:2130.50px;top:708.00px;font-size:21px;line-height:21px;color:#1b1b1b;letter-spacing:-0.494px;">21.11.2022</span>
<span class="t" style="left:2280.50px;top:708.00px;font-size:21px;line-height:21px;color:#1b1b1b;letter-spacing:-0.494px;">21.11.2022</span>
<span class="t" style="left:1071.70px;top:771.00px;font-size:21px;line-height:21px;color:#2a7ac6;letter-spacing:-0.301px;">ORD-01136-S1S5P8/Messeplanung für B2B-Kunden</span>
<span class="t" style="left:1605.50px;top:771.00px;font-size:21px;line-height:21px;color:#1b1b1b;letter-spacing:-0.271px;">INV-01260-P8V6...</span>
<span class="t" style="left:1830.70px;top:771.00px;font-size:21px;line-height:21px;color:#2a7ac6;letter-spacing:-0.114px;">Anton Bauregger GmbH</span>
<span class="t" style="left:2130.50px;top:771.00px;font-size:21px;line-height:21px;color:#1b1b1b;letter-spacing:-0.494px;">21.11.2022</span>
<span class="t" style="left:2280.50px;top:771.00px;font-size:21px;line-height:21px;color:#1b1b1b;letter-spacing:-0.494px;">21.11.2022</span>
<span class="t" style="left:1071.70px;top:834.00px;font-size:21px;line-height:21px;color:#2a7ac6;letter-spacing:-0.251px;">SEM-1014/audius:Seminarmanagement kennenlern...</span>
<span class="t" style="left:1605.50px;top:834.00px;font-size:21px;line-height:21px;color:#1b1b1b;letter-spacing:-0.309px;">INV-01257-G6T2V9</span>
<span class="t" style="left:1830.70px;top:834.00px;font-size:21px;line-height:21px;color:#2a7ac6;letter-spacing:-0.181px;">Anlagenbau Heirich AG</span>
<span class="t" style="left:2130.50px;top:834.00px;font-size:21px;line-height:21px;color:#1b1b1b;letter-spacing:-0.494px;">01.11.2022</span>
<span class="t" style="left:2280.50px;top:834.00px;font-size:21px;line-height:21px;color:#1b1b1b;letter-spacing:-0.494px;">01.11.2022</span>
<span class="t" style="left:1071.70px;top:897.00px;font-size:21px;line-height:21px;color:#2a7ac6;letter-spacing:-0.280px;">ORD-01039-S1S5P8/Bauvorhaben Produktion</span>
<span class="t" style="left:1605.50px;top:897.00px;font-size:21px;line-height:21px;color:#1b1b1b;letter-spacing:-0.341px;">INV-01243-H1P3Y0</span>
<span class="t" style="left:1830.70px;top:897.00px;font-size:21px;line-height:21px;color:#2a7ac6;letter-spacing:-0.111px;">Unidienst GmbH</span>
<span class="t" style="left:2130.50px;top:897.00px;font-size:21px;line-height:21px;color:#1b1b1b;letter-spacing:-0.650px;">19.10.2022</span>
<span class="t" style="left:2280.50px;top:897.00px;font-size:21px;line-height:21px;color:#1b1b1b;letter-spacing:-0.650px;">19.10.2022</span>
<span class="t" style="left:1071.70px;top:960.00px;font-size:21px;line-height:21px;color:#2a7ac6;letter-spacing:-0.389px;">ORD-01036-G1S5P8/PV-Anlage, Energiespeicher</span>
<span class="t" style="left:1605.50px;top:960.00px;font-size:21px;line-height:21px;color:#1b1b1b;letter-spacing:-0.433px;">INV-01250-F2K6F4</span>
<span class="t" style="left:1830.70px;top:960.00px;font-size:21px;line-height:21px;color:#2a7ac6;letter-spacing:-0.449px;">Energie GmbH</span>
<span class="t" style="left:2130.50px;top:960.00px;font-size:21px;line-height:21px;color:#1b1b1b;letter-spacing:-0.650px;">19.10.2022</span>
<span class="t" style="left:2280.50px;top:960.00px;font-size:21px;line-height:21px;color:#1b1b1b;letter-spacing:-0.650px;">19.10.2022</span>
<span class="t" style="left:1071.70px;top:1023.00px;font-size:21px;line-height:21px;color:#2a7ac6;letter-spacing:-0.284px;">ORD-01036-S1S8P8/PV-Anlage mit Blitzschutzeinb...</span>
<span class="t" style="left:1605.50px;top:1023.00px;font-size:21px;line-height:21px;color:#1b1b1b;letter-spacing:-0.250px;">INV-01251-G1W0...</span>
<span class="t" style="left:1830.70px;top:1023.00px;font-size:21px;line-height:21px;color:#2a7ac6;letter-spacing:-0.449px;">Energie GmbH</span>
<span class="t" style="left:2130.50px;top:1023.00px;font-size:21px;line-height:21px;color:#1b1b1b;letter-spacing:-0.650px;">19.12.2022</span>
<span class="t" style="left:2280.50px;top:1023.00px;font-size:21px;line-height:21px;color:#1b1b1b;letter-spacing:-0.650px;">19.10.2022</span>
<span class="t" style="left:1071.70px;top:1086.00px;font-size:21px;line-height:21px;color:#2a7ac6;letter-spacing:-0.264px;">ORD-01036-S1A3P8/Rabatt_Kopf-Aliquotierung_D...</span>
<span class="t" style="left:1605.50px;top:1086.00px;font-size:21px;line-height:21px;color:#1b1b1b;letter-spacing:-0.424px;">INV-01254-S4X0P9</span>
<span class="t" style="left:1830.70px;top:1086.00px;font-size:21px;line-height:21px;color:#2a7ac6;letter-spacing:-0.449px;">Energie GmbH</span>
<span class="t" style="left:2130.50px;top:1086.00px;font-size:21px;line-height:21px;color:#1b1b1b;letter-spacing:-0.650px;">17.10.2022</span>
<span class="t" style="left:2280.50px;top:1086.00px;font-size:21px;line-height:21px;color:#1b1b1b;letter-spacing:-0.650px;">17.10.2022</span>
<span class="t" style="left:1071.70px;top:1149.00px;font-size:21px;line-height:21px;color:#2a7ac6;letter-spacing:-0.281px;">SEM-1021/Survival Kit Training</span>
<span class="t" style="left:1605.50px;top:1149.00px;font-size:21px;line-height:21px;color:#1b1b1b;letter-spacing:-0.298px;">INV-01249-R3V3Z4</span>
<span class="t" style="left:1830.70px;top:1149.00px;font-size:21px;line-height:21px;color:#2a7ac6;letter-spacing:-0.386px;">Enzinger, Bert</span>
<span class="t" style="left:2130.50px;top:1149.00px;font-size:21px;line-height:21px;color:#1b1b1b;letter-spacing:-0.650px;">04.10.2022</span>
<span class="t" style="left:2280.50px;top:1149.00px;font-size:21px;line-height:21px;color:#1b1b1b;letter-spacing:-0.650px;">04.10.2022</span>
<span class="t" style="left:1071.70px;top:1212.00px;font-size:21px;line-height:21px;color:#2a7ac6;letter-spacing:-0.347px;">ORD-01036-S1S5A8/Abschlussrechnung Dachmon...</span>
<span class="t" style="left:1605.50px;top:1212.00px;font-size:21px;line-height:21px;color:#1b1b1b;letter-spacing:-0.236px;">INV-01216-K1H8Z8</span>
<span class="t" style="left:1830.70px;top:1212.00px;font-size:21px;line-height:21px;color:#2a7ac6;letter-spacing:-0.111px;">Unidienst GmbH</span>
<span class="t" style="left:2130.50px;top:1212.00px;font-size:21px;line-height:21px;color:#1b1b1b;letter-spacing:-0.650px;">01.10.2022</span>
<span class="t" style="left:2280.50px;top:1212.00px;font-size:21px;line-height:21px;color:#1b1b1b;letter-spacing:-0.650px;">01.10.2022</span>
<span class="t" style="left:1071.70px;top:1275.00px;font-size:21px;line-height:21px;color:#2a7ac6;letter-spacing:-0.479px;">ORD-01036-S1S5P8/Energiespeichersysteme</span>
<span class="t" style="left:1605.50px;top:1275.00px;font-size:21px;line-height:21px;color:#1b1b1b;letter-spacing:-0.278px;">INV-01237-H0L3T9</span>
<span class="t" style="left:1830.70px;top:1275.00px;font-size:21px;line-height:21px;color:#2a7ac6;letter-spacing:-0.449px;">Energie GmbH</span>
<span class="t" style="left:2130.50px;top:1275.00px;font-size:21px;line-height:21px;color:#1b1b1b;letter-spacing:-0.650px;">23.09.2022</span>
<span class="t" style="left:2280.50px;top:1275.00px;font-size:21px;line-height:21px;color:#1b1b1b;letter-spacing:-0.650px;">23.09.2022</span>
<div class="b" style="left:987px;top:1341.8px;width:648.6px;height:9px;background:#8f8d90;border-radius:4.500px;"></div>
<div class="b" style="left:2540px;top:422px;width:15px;height:136px;background:#b1afb1;border-radius:7.500px;"></div>
<span class="t" style="left:1021.00px;top:1382.00px;font-size:18.2px;line-height:18.2px;color:#333;letter-spacing:-0.232px;">1 - 157 von 157</span>
<span class="t" style="left:2422.00px;top:1382.00px;font-size:18.2px;line-height:18.2px;color:#333;letter-spacing:-0.595px;">Seite 1</span>
<svg class="b" style="left:2334px;top:1376px;" width="22" height="22" viewBox="0 0 22 22"><path d="M3 2v17" stroke="#a6a6a6" stroke-width="1.6" fill="none"/><path d="M17.500 3.500L8.500 10.500l9 7z" stroke="#a6a6a6" stroke-width="1.5" fill="none"/></svg>
<svg class="b" style="left:2377px;top:1376px;" width="22" height="22" viewBox="0 0 22 22"><path d="M21 10.500H2M10.500 2L2 10.500l8.500 8.500" fill="none" stroke="#a6a6a6" stroke-width="1.6"/></svg>
<svg class="b" style="left:2498px;top:1376px;" width="22" height="22" viewBox="0 0 22 22"><path d="M1 10.500h19M11.500 2l8.500 8.500-8.500 8.500" fill="none" stroke="#a6a6a6" stroke-width="1.6"/></svg>
<span class="t" style="left:344.00px;top:242.00px;font-size:21px;line-height:21px;color:#262626;-webkit-text-stroke:0.35px #262626;letter-spacing:0.053px;">Rechnungen nach Fälligkeit je Woche</span>
<svg class="b" style="left:710.5px;top:249.5px;" width="16" height="10" viewBox="0 0 16 10"><path d="M1 1l6.500 6.500L14 1" fill="none" stroke="#444" stroke-width="1.4"/></svg>
<svg class="b" style="left:840px;top:250px;" width="10" height="30" viewBox="0 0 10 30"><circle cx="5" cy="6.600" r="1.450" fill="#2b2b33"/><circle cx="5" cy="14.500" r="1.450" fill="#2b2b33"/><circle cx="5" cy="22.400" r="1.450" fill="#2b2b33"/></svg>
<svg class="b" style="left:903px;top:241.5px;" width="19" height="19" viewBox="0 0 19 19"><path d="M0.800 0.800l17.200 17.400M18 0.800L0.800 18.200" fill="none" stroke="#333" stroke-width="1.400"/></svg>
<svg class="b" style="left:300px;top:221px;font-family:'Liberation Sans',sans-serif" width="677" height="1196" viewBox="300 221 677 1196"><line x1="422" y1="1209.20" x2="437" y2="1209.20" stroke="#a3a3ab" stroke-width="1.3"/><text x="414.4" y="1213.40" text-anchor="end" font-size="14.3" fill="#333" letter-spacing="0.5">0</text><line x1="437" y1="1101.45" x2="928" y2="1101.45" stroke="#f0f0f3" stroke-width="1.3"/><line x1="422" y1="1101.45" x2="437" y2="1101.45" stroke="#a3a3ab" stroke-width="1.3"/><text x="414.4" y="1105.65" text-anchor="end" font-size="14.3" fill="#333" letter-spacing="0.5">5</text><line x1="437" y1="993.70" x2="928" y2="993.70" stroke="#f0f0f3" stroke-width="1.3"/><line x1="422" y1="993.70" x2="437" y2="993.70" stroke="#a3a3ab" stroke-width="1.3"/><text x="414.4" y="997.90" text-anchor="end" font-size="14.3" fill="#333" letter-spacing="0.5">10</text><line x1="437" y1="885.95" x2="928" y2="885.95" stroke="#f0f0f3" stroke-width="1.3"/><line x1="422" y1="885.95" x2="437" y2="885.95" stroke="#a3a3ab" stroke-width="1.3"/><text x="414.4" y="890.15" text-anchor="end" font-size="14.3" fill="#333" letter-spacing="0.5">15</text><line x1="437" y1="778.20" x2="928" y2="778.20" stroke="#f0f0f3" stroke-width="1.3"/><line x1="422" y1="778.20" x2="437" y2="778.20" stroke="#a3a3ab" stroke-width="1.3"/><text x="414.4" y="782.40" text-anchor="end" font-size="14.3" fill="#333" letter-spacing="0.5">20</text><line x1="437" y1="670.45" x2="928" y2="670.45" stroke="#f0f0f3" stroke-width="1.3"/><line x1="422" y1="670.45" x2="437" y2="670.45" stroke="#a3a3ab" stroke-width="1.3"/><text x="414.4" y="674.65" text-anchor="end" font-size="14.3" fill="#333" letter-spacing="0.5">25</text><line x1="437" y1="562.70" x2="928" y2="562.70" stroke="#f0f0f3" stroke-width="1.3"/><line x1="422" y1="562.70" x2="437" y2="562.70" stroke="#a3a3ab" stroke-width="1.3"/><text x="414.4" y="566.90" text-anchor="end" font-size="14.3" fill="#333" letter-spacing="0.5">30</text><line x1="437" y1="454.95" x2="928" y2="454.95" stroke="#f0f0f3" stroke-width="1.3"/><line x1="422" y1="454.95" x2="437" y2="454.95" stroke="#a3a3ab" stroke-width="1.3"/><text x="414.4" y="459.15" text-anchor="end" font-size="14.3" fill="#333" letter-spacing="0.5">35</text><line x1="437" y1="347.20" x2="928" y2="347.20" stroke="#f0f0f3" stroke-width="1.3"/><line x1="422" y1="347.20" x2="437" y2="347.20" stroke="#a3a3ab" stroke-width="1.3"/><text x="414.4" y="351.40" text-anchor="end" font-size="14.3" fill="#333" letter-spacing="0.5">40</text><line x1="436.3" y1="346.5" x2="436.3" y2="1209.9" stroke="#a3a3ab" stroke-width="1.4"/><line x1="422" y1="1209.2" x2="928" y2="1209.2" stroke="#a3a3ab" stroke-width="1.6"/><rect x="440.00" y="413.73" width="4.6" height="795.47" fill="#5b9bd5"/><text x="445.30" y="402.23" text-anchor="middle" font-size="13" fill="#333" letter-spacing="0.3">37</text><line x1="442.30" y1="1209.2" x2="442.30" y2="1222.7" stroke="#a3a3ab" stroke-width="1.3"/><text transform="translate(446.20 1229.5) rotate(-43)" text-anchor="end" font-size="15.2" textLength="35.5" lengthAdjust="spacing" fill="#333">(leer)</text><rect x="451.98" y="1188.09" width="4.6" height="21.11" fill="#5b9bd5"/><text x="456.68" y="1176.59" text-anchor="middle" font-size="13" fill="#333" letter-spacing="0.3">1</text><rect x="463.95" y="1080.54" width="4.6" height="128.66" fill="#5b9bd5"/><text x="468.65" y="1069.04" text-anchor="middle" font-size="13" fill="#333" letter-spacing="0.3">6</text><rect x="475.93" y="1166.58" width="4.6" height="42.62" fill="#5b9bd5"/><text x="480.63" y="1155.08" text-anchor="middle" font-size="13" fill="#333" letter-spacing="0.3">2</text><line x1="478.23" y1="1209.2" x2="478.23" y2="1222.7" stroke="#a3a3ab" stroke-width="1.3"/><text transform="translate(482.13 1229.5) rotate(-43)" text-anchor="end" font-size="15.2" textLength="134.9" lengthAdjust="spacing" fill="#333">Woche 44 von 2020</text><rect x="487.91" y="1145.07" width="4.6" height="64.13" fill="#5b9bd5"/><text x="492.61" y="1133.57" text-anchor="middle" font-size="13" fill="#333" letter-spacing="0.3">3</text><rect x="499.88" y="1166.58" width="4.6" height="42.62" fill="#5b9bd5"/><text x="504.58" y="1155.08" text-anchor="middle" font-size="13" fill="#333" letter-spacing="0.3">2</text><rect x="511.86" y="1145.07" width="4.6" height="64.13" fill="#5b9bd5"/><text x="516.56" y="1133.57" text-anchor="middle" font-size="13" fill="#333" letter-spacing="0.3">3</text><line x1="514.16" y1="1209.2" x2="514.16" y2="1222.7" stroke="#a3a3ab" stroke-width="1.3"/><text transform="translate(518.06 1229.5) rotate(-43)" text-anchor="end" font-size="15.2" textLength="124.2" lengthAdjust="spacing" fill="#333">Woche 5 von 2021</text><rect x="523.84" y="1188.09" width="4.6" height="21.11" fill="#5b9bd5"/><text x="528.54" y="1176.59" text-anchor="middle" font-size="13" fill="#333" letter-spacing="0.3">1</text><rect x="535.82" y="1188.09" width="4.6" height="21.11" fill="#5b9bd5"/><text x="540.52" y="1176.59" text-anchor="middle" font-size="13" fill="#333" letter-spacing="0.3">1</text><rect x="547.79" y="1188.09" width="4.6" height="21.11" fill="#5b9bd5"/><text x="552.49" y="1176.59" text-anchor="middle" font-size="13" fill="#333" letter-spacing="0.3">1</text><line x1="550.09" y1="1209.2" x2="550.09" y2="1222.7" stroke="#a3a3ab" stroke-width="1.3"/><text transform="translate(553.99 1229.5) rotate(-43)" text-anchor="end" font-size="15.2" textLength="126.9" lengthAdjust="spacing" fill="#333">Woche 11 von 2021</text><rect x="559.77" y="1188.09" width="4.6" height="21.11" fill="#5b9bd5"/><text x="564.47" y="1176.59" text-anchor="middle" font-size="13" fill="#333" letter-spacing="0.3">1</text><rect x="571.75" y="1123.56" width="4.6" height="85.64" fill="#5b9bd5"/><text x="576.45" y="1112.06" text-anchor="middle" font-size="13" fill="#333" letter-spacing="0.3">4</text><rect x="583.72" y="1166.58" width="4.6" height="42.62" fill="#5b9bd5"/><text x="588.42" y="1155.08" text-anchor="middle" font-size="13" fill="#333" letter-spacing="0.3">2</text><line x1="586.02" y1="1209.2" x2="586.02" y2="1222.7" stroke="#a3a3ab" stroke-width="1.3"/><text transform="translate(589.92 1229.5) rotate(-43)" text-anchor="end" font-size="15.2" textLength="130.3" lengthAdjust="spacing" fill="#333">Woche 18 von 2021</text><rect x="595.70" y="1188.09" width="4.6" height="21.11" fill="#5b9bd5"/><text x="600.40" y="1176.59" text-anchor="middle" font-size="13" fill="#333" letter-spacing="0.3">1</text><rect x="607.68" y="1188.09" width="4.6" height="21.11" fill="#5b9bd5"/><text x="612.38" y="1176.59" text-anchor="middle" font-size="13" fill="#333" letter-spacing="0.3">1</text><rect x="619.66" y="1188.09" width="4.6" height="21.11" fill="#5b9bd5"/><text x="624.36" y="1176.59" text-anchor="middle" font-size="13" fill="#333" letter-spacing="0.3">1</text><line x1="621.96" y1="1209.2" x2="621.96" y2="1222.7" stroke="#a3a3ab" stroke-width="1.3"/><text transform="translate(625.86 1229.5) rotate(-43)" text-anchor="end" font-size="15.2" textLength="132.6" lengthAdjust="spacing" fill="#333">Woche 28 von 2021</text><rect x="631.63" y="1188.09" width="4.6" height="21.11" fill="#5b9bd5"/><text x="636.33" y="1176.59" text-anchor="middle" font-size="13" fill="#333" letter-spacing="0.3">1</text><rect x="643.61" y="1188.09" width="4.6" height="21.11" fill="#5b9bd5"/><text x="648.31" y="1176.59" text-anchor="middle" font-size="13" fill="#333" letter-spacing="0.3">1</text><rect x="655.59" y="1166.58" width="4.6" height="42.62" fill="#5b9bd5"/><text x="660.29" y="1155.08" text-anchor="middle" font-size="13" fill="#333" letter-spacing="0.3">2</text><line x1="657.89" y1="1209.2" x2="657.89" y2="1222.7" stroke="#a3a3ab" stroke-width="1.3"/><text transform="translate(661.79 1229.5) rotate(-43)" text-anchor="end" font-size="15.2" textLength="132.6" lengthAdjust="spacing" fill="#333">Woche 36 von 2021</text><rect x="667.56" y="1123.56" width="4.6" height="85.64" fill="#5b9bd5"/><text x="672.26" y="1112.06" text-anchor="middle" font-size="13" fill="#333" letter-spacing="0.3">4</text><rect x="679.54" y="1166.58" width="4.6" height="42.62" fill="#5b9bd5"/><text x="684.24" y="1155.08" text-anchor="middle" font-size="13" fill="#333" letter-spacing="0.3">2</text><rect x="691.52" y="1188.09" width="4.6" height="21.11" fill="#5b9bd5"/><text x="696.22" y="1176.59" text-anchor="middle" font-size="13" fill="#333" letter-spacing="0.3">1</text><line x1="693.82" y1="1209.2" x2="693.82" y2="1222.7" stroke="#a3a3ab" stroke-width="1.3"/><text transform="translate(697.72 1229.5) rotate(-43)" text-anchor="end" font-size="15.2" textLength="132.6" lengthAdjust="spacing" fill="#333">Woche 49 von 2021</text><rect x="703.49" y="1188.09" width="4.6" height="21.11" fill="#5b9bd5"/><text x="708.19" y="1176.59" text-anchor="middle" font-size="13" fill="#333" letter-spacing="0.3">1</text><rect x="715.47" y="1188.09" width="4.6" height="21.11" fill="#5b9bd5"/><text x="720.17" y="1176.59" text-anchor="middle" font-size="13" fill="#333" letter-spacing="0.3">1</text><rect x="727.45" y="1188.09" width="4.6" height="21.11" fill="#5b9bd5"/><text x="732.15" y="1176.59" text-anchor="middle" font-size="13" fill="#333" letter-spacing="0.3">1</text><line x1="729.75" y1="1209.2" x2="729.75" y2="1222.7" stroke="#a3a3ab" stroke-width="1.3"/><text transform="translate(733.65 1229.5) rotate(-43)" text-anchor="end" font-size="15.2" textLength="132.6" lengthAdjust="spacing" fill="#333">Woche 53 von 2021</text><rect x="739.43" y="1166.58" width="4.6" height="42.62" fill="#5b9bd5"/><text x="744.12" y="1155.08" text-anchor="middle" font-size="13" fill="#333" letter-spacing="0.3">2</text><rect x="751.40" y="1188.09" width="4.6" height="21.11" fill="#5b9bd5"/><text x="756.10" y="1176.59" text-anchor="middle" font-size="13" fill="#333" letter-spacing="0.3">1</text><rect x="763.38" y="1166.58" width="4.6" height="42.62" fill="#5b9bd5"/><text x="768.08" y="1155.08" text-anchor="middle" font-size="13" fill="#333" letter-spacing="0.3">2</text><line x1="765.68" y1="1209.2" x2="765.68" y2="1222.7" stroke="#a3a3ab" stroke-width="1.3"/><text transform="translate(769.58 1229.5) rotate(-43)" text-anchor="end" font-size="15.2" textLength="126.5" lengthAdjust="spacing" fill="#333">Woche 9 von 2022</text><rect x="775.36" y="1166.58" width="4.6" height="42.62" fill="#5b9bd5"/><text x="780.06" y="1155.08" text-anchor="middle" font-size="13" fill="#333" letter-spacing="0.3">2</text><rect x="787.33" y="1188.09" width="4.6" height="21.11" fill="#5b9bd5"/><text x="792.03" y="1176.59" text-anchor="middle" font-size="13" fill="#333" letter-spacing="0.3">1</text><rect x="799.31" y="1166.58" width="4.6" height="42.62" fill="#5b9bd5"/><text x="804.01" y="1155.08" text-anchor="middle" font-size="13" fill="#333" letter-spacing="0.3">2</text><line x1="801.61" y1="1209.2" x2="801.61" y2="1222.7" stroke="#a3a3ab" stroke-width="1.3"/><text transform="translate(805.51 1229.5) rotate(-43)" text-anchor="end" font-size="15.2" textLength="132.6" lengthAdjust="spacing" fill="#333">Woche 15 von 2022</text><rect x="811.29" y="1188.09" width="4.6" height="21.11" fill="#5b9bd5"/><text x="815.99" y="1176.59" text-anchor="middle" font-size="13" fill="#333" letter-spacing="0.3">1</text><rect x="823.26" y="1123.56" width="4.6" height="85.64" fill="#5b9bd5"/><text x="827.96" y="1112.06" text-anchor="middle" font-size="13" fill="#333" letter-spacing="0.3">4</text><rect x="835.24" y="1188.09" width="4.6" height="21.11" fill="#5b9bd5"/><text x="839.94" y="1176.59" text-anchor="middle" font-size="13" fill="#333" letter-spacing="0.3">1</text><line x1="837.54" y1="1209.2" x2="837.54" y2="1222.7" stroke="#a3a3ab" stroke-width="1.3"/><text transform="translate(841.44 1229.5) rotate(-43)" text-anchor="end" font-size="15.2" textLength="134.9" lengthAdjust="spacing" fill="#333">Woche 25 von 2022</text><rect x="847.22" y="1166.58" width="4.6" height="42.62" fill="#5b9bd5"/><text x="851.92" y="1155.08" text-anchor="middle" font-size="13" fill="#333" letter-spacing="0.3">2</text><rect x="859.20" y="1166.58" width="4.6" height="42.62" fill="#5b9bd5"/><text x="863.89" y="1155.08" text-anchor="middle" font-size="13" fill="#333" letter-spacing="0.3">2</text><rect x="871.17" y="1037.52" width="4.6" height="171.68" fill="#5b9bd5"/><text x="875.87" y="1026.02" text-anchor="middle" font-size="13" fill="#333" letter-spacing="0.3">8</text><line x1="873.47" y1="1209.2" x2="873.47" y2="1222.7" stroke="#a3a3ab" stroke-width="1.3"/><text transform="translate(877.37 1229.5) rotate(-43)" text-anchor="end" font-size="15.2" textLength="134.9" lengthAdjust="spacing" fill="#333">Woche 39 von 2022</text><rect x="883.15" y="521.28" width="4.6" height="687.92" fill="#5b9bd5"/><text x="884.95" y="509.78" text-anchor="middle" font-size="13" fill="#333" letter-spacing="0.3">32</text><rect x="895.13" y="1188.09" width="4.6" height="21.11" fill="#5b9bd5"/><text x="899.83" y="1176.59" text-anchor="middle" font-size="13" fill="#333" letter-spacing="0.3">1</text><rect x="907.10" y="1037.52" width="4.6" height="171.68" fill="#5b9bd5"/><text x="911.80" y="1026.02" text-anchor="middle" font-size="13" fill="#333" letter-spacing="0.3">8</text><line x1="909.40" y1="1209.2" x2="909.40" y2="1222.7" stroke="#a3a3ab" stroke-width="1.3"/><text transform="translate(913.30 1229.5) rotate(-43)" text-anchor="end" font-size="15.2" textLength="126.5" lengthAdjust="spacing" fill="#333">Woche 7 von 2023</text><rect x="919.08" y="1059.03" width="4.6" height="150.17" fill="#5b9bd5"/><text x="923.78" y="1047.53" text-anchor="middle" font-size="13" fill="#333" letter-spacing="0.3">7</text><text transform="translate(385.5 771.2) rotate(-90)" text-anchor="middle" font-size="18" fill="#333">Anzahl: Alle (Rechnungs-ID)</text><text x="681.5" y="1393.5" text-anchor="middle" font-size="18.4" fill="#333">Woche (Zahlungsdatum Netto)</text></svg>
<svg class="b" style="left:0;top:70px" width="300" height="1347" viewBox="0 70 300 1347"><path fill="none" stroke="#333" stroke-width="1.6" d="M23.300 161.200L33.800 150.800L44.300 161.200M25.800 158.900V170H31.800V162.500H35.900V170H42V158.900"/><circle fill="none" stroke="#333" stroke-width="1.6" cx="34.100" cy="212.800" r="10.700"/><path fill="none" stroke="#333" stroke-width="1.6" d="M33.200 206V213.300H38"/><path fill="none" stroke="#333" stroke-width="1.6" stroke-linejoin="round" d="M37.300 254.200L44.600 261.400M38.400 255.300L32.400 261.600Q30 263.600 25.900 263.700L35 273.200Q35.200 269.300 37 266.800L43.500 260.300M30.400 268.500L22 276.800"/><path fill="none" stroke="#333" stroke-width="1.6" d="M33.100 370V392.300M22 381.200H44"/><path fill="none" stroke="#333" stroke-width="1.500" d="M23.600 375.500V379M26.200 373.500V379M28.800 371.500V379M31 372.500V379M36 372.300H42.400M36 375.400H42.400M36 378.500H42.400"/><path fill="#333" d="M26.400 383.600a3 3 0 1 0 3 3h-3z"/><path fill="#333" d="M27.300 382.700a3 3 0 0 1 3 3h-3z" opacity=".8"/><path fill="none" stroke="#333" stroke-width="1.500" d="M35.300 386.200l1.800-1.400 2.200 2.600 3.600-3.600"/><path fill="none" stroke="#333" stroke-width="1.6" d="M29 426.800H25.900V446.200H42.200V426.800H39.100"/><path fill="none" stroke="#333" stroke-width="1.6" d="M29.200 429.400V426.200H31.500Q32.200 423.600 34.100 423.600Q36 423.600 36.700 426.200H39V429.400Z"/><path fill="none" stroke="#333" stroke-width="1.6" stroke-width="1.400" d="M28.500 441.500l1-3 8.600-7.700 2 2.200-8.600 7.700zM28.500 441.500l3-.8"/><path fill="none" stroke="#333" stroke-width="1.6" d="M27.600 493.200V479H36.800L41.200 483.400V493.200M36.600 479.200V483.600H41"/><path fill="none" stroke="#333" stroke-width="1.6" stroke-width="1.300" d="M29.800 482.300H32.800M29.800 485.300H32.800M29.800 488.300H32.800"/><path fill="none" stroke="#333" stroke-width="1.6" d="M24.200 493.700H43.600V498H24.200Z"/><path fill="none" stroke="#333" stroke-width="1.6" d="M24.200 621.200H30.200L37.400 628.800H44V636H24.200Z"/><path fill="none" stroke="#333" stroke-width="1.6" d="M25.700 621V616.800H39.300V628.500"/><path fill="none" stroke="#333" stroke-width="1.6" d="M27.500 616.600V613.700H42.500V628.600"/><circle fill="none" stroke="#333" stroke-width="1.6" cx="34.100" cy="673" r="6.400"/><path fill="none" stroke="#333" stroke-width="1.6" d="M24.200 690a9.900 9.900 0 0 1 19.800 0"/><path fill="none" stroke="#333" stroke-width="1.6" d="M23.800 805H37L42.600 810.700V827H23.800Z"/><path fill="none" stroke="#333" stroke-width="1.6" stroke-width="1.300" d="M36.800 805.200V810.900H42.400"/><path fill="none" stroke="#333" stroke-width="1.400" d="M26.300 811H27.900M29.600 811H35.500M26.300 813.800H27.900M29.600 813.800H40M26.300 816.800H27.900M29.600 816.800H40M26.300 819.700H27.900M29.600 819.700H40"/><circle fill="none" stroke="#555" stroke-width="1.500" cx="30.800" cy="865.200" r="5.200"/><path fill="none" stroke="#555" stroke-width="1.500" stroke-width="1.200" d="M32.300 863.400q-1.500-1-2.700 0t.8 1.900 1.200 2-2.900.2M30.800 861.700v7"/><path fill="none" stroke="#555" stroke-width="1.500" d="M42.800 861.500H38.500M40.300 859.500L38.300 861.500L40.300 863.500M37.200 867.500H42.600V876.300H33.300V873.800M25.200 874.200H30M28.200 872.200L30.200 874.200L28.200 876.200"/><path fill="none" stroke="#333" stroke-width="1.6" d="M30.600 932H23.800V910H36.800L42.600 915.800V921"/><path fill="none" stroke="#333" stroke-width="1.6" stroke-width="1.300" d="M36.600 910.200V916H42.400"/><path fill="none" stroke="#333" stroke-width="1.400" d="M26.300 915.500H27.900M29.600 915.500H34M26.300 918.800H27.900M29.600 918.800H34M26.300 922H27.900"/><g fill="none" stroke="#333" stroke-width="1.400"><ellipse cx="39.300" cy="923.700" rx="6" ry="2.300"/><path d="M33.300 923.700v5.700a6 2.300 0 0 0 12 0v-5.700M33.300 926.500a6 2.300 0 0 0 12 0"/></g><path fill="none" stroke="#333" stroke-width="1.6" stroke-linejoin="round" d="M24.800 979.800V965.300H30.700L33.600 968.200H43.200V979.800Z"/><path fill="none" stroke="#333" stroke-width="1.300" d="M39.300 971.700q-1.600-1-2.900 0t.9 2 1.300 2.100-3.100.2M37.500 969.800v7.600"/><path fill="none" stroke="#333" stroke-width="1.6" stroke-width="1.500" stroke-linejoin="round" d="M30.600 1026V1021.500M33.400 1025.500V1020.300M36.200 1025.600V1018.500L38.200 1016.800L40 1018.600M36.300 1018.500L34.600 1019.600M41.300 1021.500V1029.500Q41.300 1035.200 35.500 1035.200Q31 1035.200 29 1032.300L26.600 1027.800Q27.800 1026.300 29.300 1027.800L30.600 1029.500V1021.500Q32 1020 33.400 1021.300Q34.800 1019.600 36.200 1021.200L38.700 1023V1018.500Q40 1017.200 41.300 1018.600V1022"/><path fill="none" stroke="#333" stroke-width="1.6" d="M33 1086.200H27V1068.800H37L42.400 1074.200V1076"/><path fill="none" stroke="#333" stroke-width="1.6" stroke-width="1.300" d="M36.800 1069V1074.400H42.200"/><path fill="none" stroke="#333" stroke-width="1.300" d="M32.500 1077.300q-1.600-1-2.900 0t.9 2 1.300 2.100-3.100.2M30.700 1075.500v7.600"/><g fill="none" stroke="#333" stroke-width="1.300"><ellipse cx="39.600" cy="1078.200" rx="3.700" ry="1.700"/><path d="M35.900 1078.200v6.600a3.700 1.700 0 0 0 7.400 0v-6.600M35.900 1081.500a3.700 1.700 0 0 0 7.400 0"/></g><path fill="none" stroke="#666" stroke-width="1.500" d="M29.800 1133V1123.500H42.300V1131"/><path fill="none" stroke="#666" stroke-width="1.500" stroke-width="1.200" d="M32.400 1127.200H33.600M35 1127.200H39.800M32.400 1130.200H33.600M35 1130.200H38"/><path fill="none" stroke="#666" stroke-width="1.500" d="M26.800 1133.800H37.500V1138.300H26.800Z"/><path fill="#777" d="M39 1131h6.800v2h-1l-1.800 3.700 1.800 3.700h1v2H39v-2h1l1.800-3.700-1.800-3.700h-1z"/></svg>
<svg class="b" style="left:300px;top:71px" width="2260" height="64" viewBox="300 71 2260 64"><path fill="none" stroke="#3a3a3a" stroke-width="1.500" d="M389 111.600H381.900V93H404.200V111.600H395"/><path fill="none" stroke="#3aa655" stroke-width="1.600" d="M384.500 103.300L390.600 97.300L394.800 101.500L401 95.700"/><path fill="none" stroke="#2272b9" stroke-width="1.600" d="M392 114.600V105.800M388.800 108.600L392 105.400L395.200 108.600"/><path fill="none" stroke="#3fa95f" stroke-width="1.600" d="M672.900 91.200V114.500M661.200 102.900H684.600"/><path fill="none" stroke="#3a3a3a" stroke-width="1.500" d="M772.200 96.200H790.200M777.300 96V93.300Q777.300 92.300 778.300 92.300H784.100Q785.100 92.300 785.100 93.300V96M774.200 96.400L775.100 112.500Q775.200 113.700 776.400 113.700H786Q787.200 113.700 787.300 112.500L788.200 96.400"/><path fill="none" stroke="#3a3a3a" stroke-width="1.500" stroke-width="1.200" d="M778.900 99.800V110.200M781.300 99.800V110.200M783.700 99.800V110.200"/><path fill="none" stroke="#3a3a3a" stroke-width="1.500" d="M986.400 93.400A10.800 10.800 0 1 0 993.300 92.700"/><path fill="none" stroke="#3a3a3a" stroke-width="1.500" d="M981.600 92.800H986.800V98"/><defs><linearGradient id="pb1" x1="0" y1="0" x2="1" y2="1"><stop offset="0" stop-color="#e3ad17"/><stop offset="1" stop-color="#c58a0c"/></linearGradient><linearGradient id="pb2" x1="0" y1="0" x2="1" y2="1"><stop offset="0" stop-color="#f3cc3c"/><stop offset="1" stop-color="#e2ac22"/></linearGradient><linearGradient id="pb3" x1="0" y1="0" x2="1" y2="1"><stop offset="0" stop-color="#f8de63"/><stop offset="1" stop-color="#eec233"/></linearGradient></defs><rect x="1180.300" y="91.200" width="8" height="24" rx="1" fill="url(#pb1)"/><path d="M1175.300 97.500h6.500a1 1 0 0 1 1 1v16.700h-8.500v-16.700a1 1 0 0 1 1-1z" fill="url(#pb2)"/><path d="M1171.200 104h5.500a1 1 0 0 1 1 1v10.200h-6.500a1 1 0 0 1-1-1v-9.200a1 1 0 0 1 1-1z" fill="url(#pb3)"/><path fill="none" stroke="#3a3a3a" stroke-width="1.500" d="M1470.600 110.200H1463.900V96.300H1485.800V106.800"/><path fill="none" stroke="#3a3a3a" stroke-width="1.500" d="M1464.300 96.600L1474.900 102.600L1485.400 96.600"/><g fill="none" stroke="#757575" stroke-width="1.450"><path d="M1474.600 110.400A3.700 3.700 0 1 1 1480.400 109.650"/><path d="M1484.400 108.200A3.900 3.900 0 1 1 1478.700 108.960"/></g><path fill="none" stroke="#111" stroke-width="1.900" stroke-linejoin="round" d="M1806.400 93.400H1821.300L1828.600 102L1821.300 110.800H1806.400L1813.300 102ZM1819.700 93.800L1807.800 110.200M1824.600 97.600L1814.600 110.400"/><path fill="none" stroke="#3b3348" stroke-width="1.600" d="M1963.300 92.200H1982.700V112.200H1963.300ZM1961 97.700H1963.300M1961 107.900H1963.300"/><path fill="none" stroke="#3b3348" stroke-width="1.300" d="M1969.300 99.600H1971.800V108.300H1969.300ZM1975.400 96.100H1978.500V108.300H1975.400Z"/></svg>
<svg class="b" style="left:1780px;top:150px" width="280" height="56" viewBox="1780 150 280 56"><path fill="none" stroke="#3b79b7" stroke-width="1.600" d="M1812.500 185.800H1800.800V168.600H1822.600V179.500M1800.800 172.600H1822.600M1808 172.600V185.800M1815.500 172.600V179.200"/><circle fill="none" stroke="#3b79b7" stroke-width="1.600" stroke-width="1.400" cx="1818.500" cy="184.600" r="2.500"/><path fill="none" stroke="#3b79b7" stroke-width="1.500" d="M1818.500 179.800v2.200M1818.500 187.200v2.200M1813.700 184.600h2.200M1821.100 184.600h2.200M1815.100 181.200l1.600 1.600M1820.300 186.400l1.600 1.600M1821.900 181.200l-1.600 1.600M1816.700 186.400l-1.600 1.600"/><path fill="none" stroke="#3b79b7" stroke-width="1.600" stroke-linejoin="round" d="M2011 168.200H2034.600L2025.400 180.300V187.800H2020.200V180.300Z"/></svg>
</body></html>
